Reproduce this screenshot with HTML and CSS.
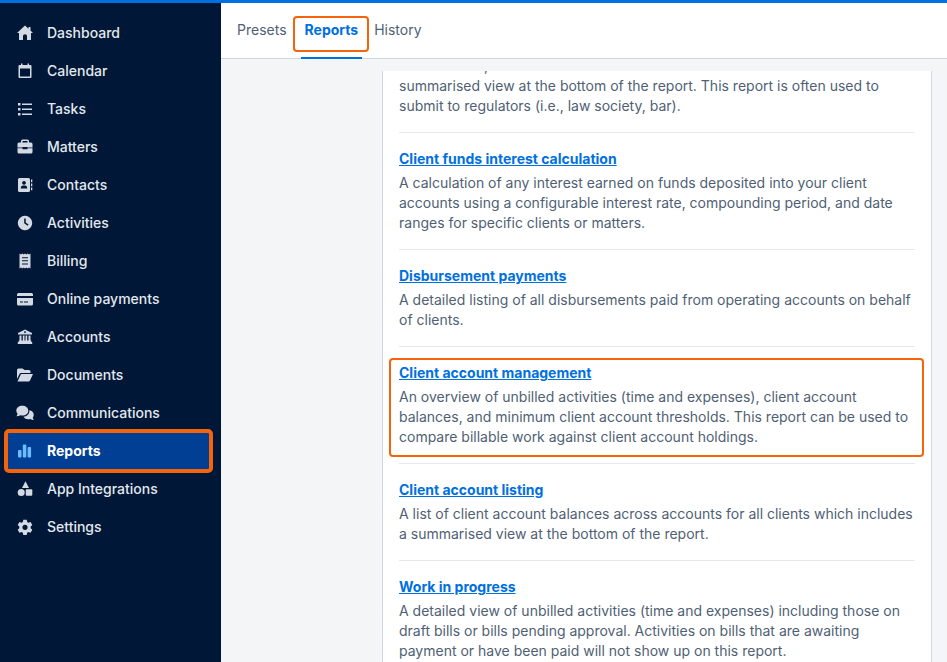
FILE: index.html
```html
<!DOCTYPE html>
<html lang="en">
<head>
<meta charset="utf-8">
<meta name="viewport" content="width=device-width, initial-scale=1">
<title>Reports</title>
<link rel="stylesheet" href="styles.css">
</head>
<body>
<div class="app">
  <nav class="sidebar" aria-label="Main">
    <a class="nav-item" href="#"><svg class="icon" viewBox="0 0 18 18"><path d="M9 1.500 1 9h2v6.500q0 .5.5.5H7v-4q0-1.800 2-1.800t2 1.800v4h3.500q.5 0 .5-.5V9h2l-2.500-2.400V3h-2v1.700z"/></svg>Dashboard</a>
    <a class="nav-item" href="#"><svg class="icon" viewBox="0 0 18 18"><path fill-rule="evenodd" d="M5 1.500h1.500V3h5V1.500H13V3h1.500q1 0 1 1v11q0 1-1 1h-11q-1 0-1-1V4q0-1 1-1H5zM4 6.500v8h10v-8z"/></svg>Calendar</a>
    <a class="nav-item" href="#"><svg class="icon" viewBox="0 0 18 18"><path d="M2 3h2.500v2.500H2zM2 8h2.500v2.500H2zM2 13h2.500v2.500H2zM6 3.500h10V5H6zM6 8.500h10V10H6zM6 13.500h10V15H6z"/></svg>Tasks</a>
    <a class="nav-item" href="#"><svg class="icon" viewBox="0 0 18 18"><path fill-rule="evenodd" d="M5 4.500V3q0-1.500 1.500-1.500h5Q13 1.500 13 3v1.500h2q1.500 0 1.500 1.500v3.500h-5V9h-5v.5h-5V6Q1.500 4.500 3 4.500zM6.500 3v1.500h5V3zM1.500 10.300h5v.9h5v-.9h5V14q0 1.500-1.500 1.500H3Q1.500 15.500 1.500 14z"/></svg>Matters</a>
    <a class="nav-item" href="#"><svg class="icon" viewBox="0 0 18 18"><path fill-rule="evenodd" d="M3.500 2h9Q14 2 14 3.500v11q0 1.500-1.500 1.500h-9Q2 16 2 14.500v-11Q2 2 3.500 2zM8 5a1.900 1.900 0 1 0 .01 0zM4.800 12.500h6.400q0-3-2.200-3H7q-2.200 0-2.200 3zM15 3.500h1.300v2.700H15zM15 7.500h1.300v2.700H15zM15 11.500h1.300v2.700H15z"/></svg>Contacts</a>
    <a class="nav-item" href="#"><svg class="icon" viewBox="0 0 18 18"><path fill-rule="evenodd" d="M9 1.800a7.200 7.200 0 1 0 .01 0zM8.200 4.500h1.500v4l2.800 2-.8 1.200-3.500-2.400z"/></svg>Activities</a>
    <a class="nav-item" href="#"><svg class="icon" viewBox="0 0 18 18"><path fill-rule="evenodd" d="m3.500 1.500 1.500 1 1.400-1 1.300 1 1.300-1 1.300 1 1.300-1 1.400 1 1.500-1v15l-1.500-1-1.400 1-1.300-1-1.300 1-1.300-1-1.300 1-1.400-1-1.500 1zM6 5.200v1h6v-1zM6 8.300v1h6v-1zM6 11.400v1h6v-1z"/></svg>Billing</a>
    <a class="nav-item" href="#"><svg class="icon" viewBox="0 0 18 18"><path fill-rule="evenodd" d="M1 4.500Q1 3 2.500 3h13Q17 3 17 4.500V6H1zM1 8h16v6q0 1.500-1.500 1.500h-13Q1 15.500 1 14zM4 11.500v1h3v-1zM8 11.500v1h4v-1z"/></svg>Online payments</a>
    <a class="nav-item" href="#"><svg class="icon" viewBox="0 0 18 18"><path fill-rule="evenodd" d="M9 1.500 16 5v1.500H2V5zM9 3.200a.9.900 0 1 0 .01 0zM3.500 7.500h2v5h1.300v-5h1.700v5h1v-5h1.700v5h1.300v-5h2v5h.8v1.500h.9V16H1.800v-2h.9v-1.500h.8z"/></svg>Accounts</a>
    <a class="nav-item" href="#"><svg class="icon" viewBox="0 0 18 18"><path d="M1 13V4q0-1.500 1.500-1.500h4L8.500 4H13q1.500 0 1.500 1.500V7H5.200Q4 7 3.400 8.200zM1.500 15.500l3-6.500q.4-1 1.300-1H17l-3 6.500q-.5 1-1.500 1z"/></svg>Documents</a>
    <a class="nav-item" href="#"><svg class="icon" viewBox="0 0 18 18"><path d="M6.300 1.800c3.400 0 6 2.100 6 4.900s-2.600 4.900-6 4.900q-1 0-2-.3-1.500 1-3.800 1Q1.300 11 1.500 9.700.3 8.400.3 6.700c0-2.800 2.600-4.900 6-4.900zM13.400 6.200c2.600.3 4.400 2.300 4.400 4.600q0 1.500-1 2.700.2 1.300 1 2.500-2 0-3.500-1-.9.300-2 .3-3.300 0-4.900-2.600c3.600-.2 6.200-2.700 6-6.500z"/></svg>Communications</a>
    <a class="nav-item active" href="#" aria-current="page"><svg class="icon" viewBox="0 0 18 18"><rect x="2" y="8" width="3.500" height="7.500" rx="1"/><rect x="6.800" y="2.500" width="3.500" height="13" rx="1"/><rect x="11.600" y="5" width="3.500" height="10.500" rx="1"/></svg>Reports</a>
    <a class="nav-item" href="#"><svg class="icon" viewBox="0 0 18 18"><path d="M9.500 1.200 13 8H6z"/><circle cx="5.200" cy="12.500" r="3.500"/><rect x="9.800" y="9.200" width="6.500" height="6.500" rx="1"/></svg>App Integrations</a>
    <a class="nav-item" href="#"><svg class="icon" viewBox="0 0 18 18"><path fill-rule="evenodd" d="M7.300 1.800h3.400l.5 2.200 1.300.8 2.100-.7 1.700 3-1.600 1.500v1.600l1.600 1.500-1.700 3-2.100-.7-1.300.8-.5 2.200H7.300L6.800 14.800 5.500 14l-2.100.7-1.700-3 1.600-1.500V8.600L1.700 7.100l1.700-3 2.100.7L6.800 4zM9 6.800a2.600 2.600 0 1 0 .01 0z"/></svg>Settings</a>
  </nav>
  <div class="main">
    <nav class="tabs" aria-label="Report views">
      <a class="tab" href="#">Presets</a>
      <a class="tab selected" href="#" aria-current="page">Reports</a>
      <a class="tab" href="#">History</a>
    </nav>
    <main class="viewport">
      <div class="card">
        <section class="report">
          <p>Transactions, client account balances and matters for all clients with a summarised view at the bottom of the report. This report is often used to submit to regulators (i.e., law society, bar).</p>
        </section>
        <section class="report">
          <h2><a href="#">Client funds interest calculation</a></h2>
          <p>A calculation of any interest earned on funds deposited into your client accounts using a configurable interest rate, compounding period, and date ranges for specific clients or matters.</p>
        </section>
        <section class="report">
          <h2><a href="#">Disbursement payments</a></h2>
          <p>A detailed listing of all disbursements paid from operating accounts on behalf of clients.</p>
        </section>
        <section class="report highlighted">
          <h2><a href="#">Client account management</a></h2>
          <p>An overview of unbilled activities (time and expenses), client account balances, and minimum client account thresholds. This report can be used to compare billable work against client account holdings.</p>
        </section>
        <section class="report">
          <h2><a href="#">Client account listing</a></h2>
          <p>A list of client account balances across accounts for all clients which includes a summarised view at the bottom of the report.</p>
        </section>
        <section class="report">
          <h2><a href="#">Work in progress</a></h2>
          <p>A detailed view of unbilled activities (time and expenses) including those on draft bills or bills pending approval. Activities on bills that are awaiting payment or have been paid will not show up on this report.</p>
        </section>
      </div>
    </main>
  </div>
</div>
</body>
</html>
```
FILE: styles.css
```css
* {
  box-sizing: border-box;
}

body {
  margin: 0;
  font: 14px/20px Inter, "Liberation Sans", sans-serif;
  color: #4f5f75;
  background: #f4f5f7;
}

a {
  color: inherit;
  text-decoration: none;
}

.app {
  display: flex;
  height: 100vh;
  overflow: hidden;
  border-top: 3px solid #0070e0;
}

.sidebar {
  flex: 0 0 221px;
  padding: 11px 8px;
  background: #001737;
}

.nav-item {
  position: relative;
  display: flex;
  align-items: center;
  gap: 13px;
  height: 38px;
  padding-left: 8px;
  font-weight: 500;
  color: #e3e8ee;
}

.icon {
  width: 18px;
  height: 18px;
  fill: #d3dae3;
}

.active {
  font-weight: 700;
  color: #fff;
  background: #003f94;
}

.active .icon {
  fill: #6cbcff;
}

.active::after {
  content: "";
  position: absolute;
  inset: -3px 0 -3px -4px;
  border: 4px solid #f5640a;
  border-radius: 5px;
}

.main {
  flex: 1;
  min-width: 0;
  display: flex;
  flex-direction: column;
}

.tabs {
  display: flex;
  flex: 0 0 56px;
  padding: 0 12px;
  gap: 8px;
  background: #fff;
  border-bottom: 1px solid #ced8e2;
}

.tab {
  position: relative;
  height: 56px;
  margin-bottom: -1px;
  padding: 17px 4px 0;
}

.selected {
  margin-left: 2px;
  font-weight: 700;
  color: #0070e0;
  border-bottom: 2px solid #0070e0;
}

.selected::after {
  content: "";
  position: absolute;
  inset: 13px -7px 5px -8px;
  border: 2px solid #f5640a;
  border-radius: 4px;
}

.viewport {
  flex: 1;
  min-height: 0;
  margin: 12px 15px 0 161px;
  overflow: hidden;
}

.card {
  margin-top: -32px;
  padding: 0 16px;
  background: #fff;
  border: 1px solid #ced8e2;
}

.report {
  position: relative;
  padding: 16px 0;
}

.report + .report {
  border-top: 1px solid #e6e9ee;
}

.report h2 {
  margin: 0 0 4px;
  font-size: 14px;
  line-height: 20px;
  font-weight: 700;
  color: #0070e0;
}

.report h2 a {
  text-decoration: underline;
}

.report p {
  margin: 0;
}

.highlighted::after {
  content: "";
  position: absolute;
  inset: 11px -9px 6px -10px;
  border: 2px solid #f5640a;
  border-radius: 4px;
}
```
